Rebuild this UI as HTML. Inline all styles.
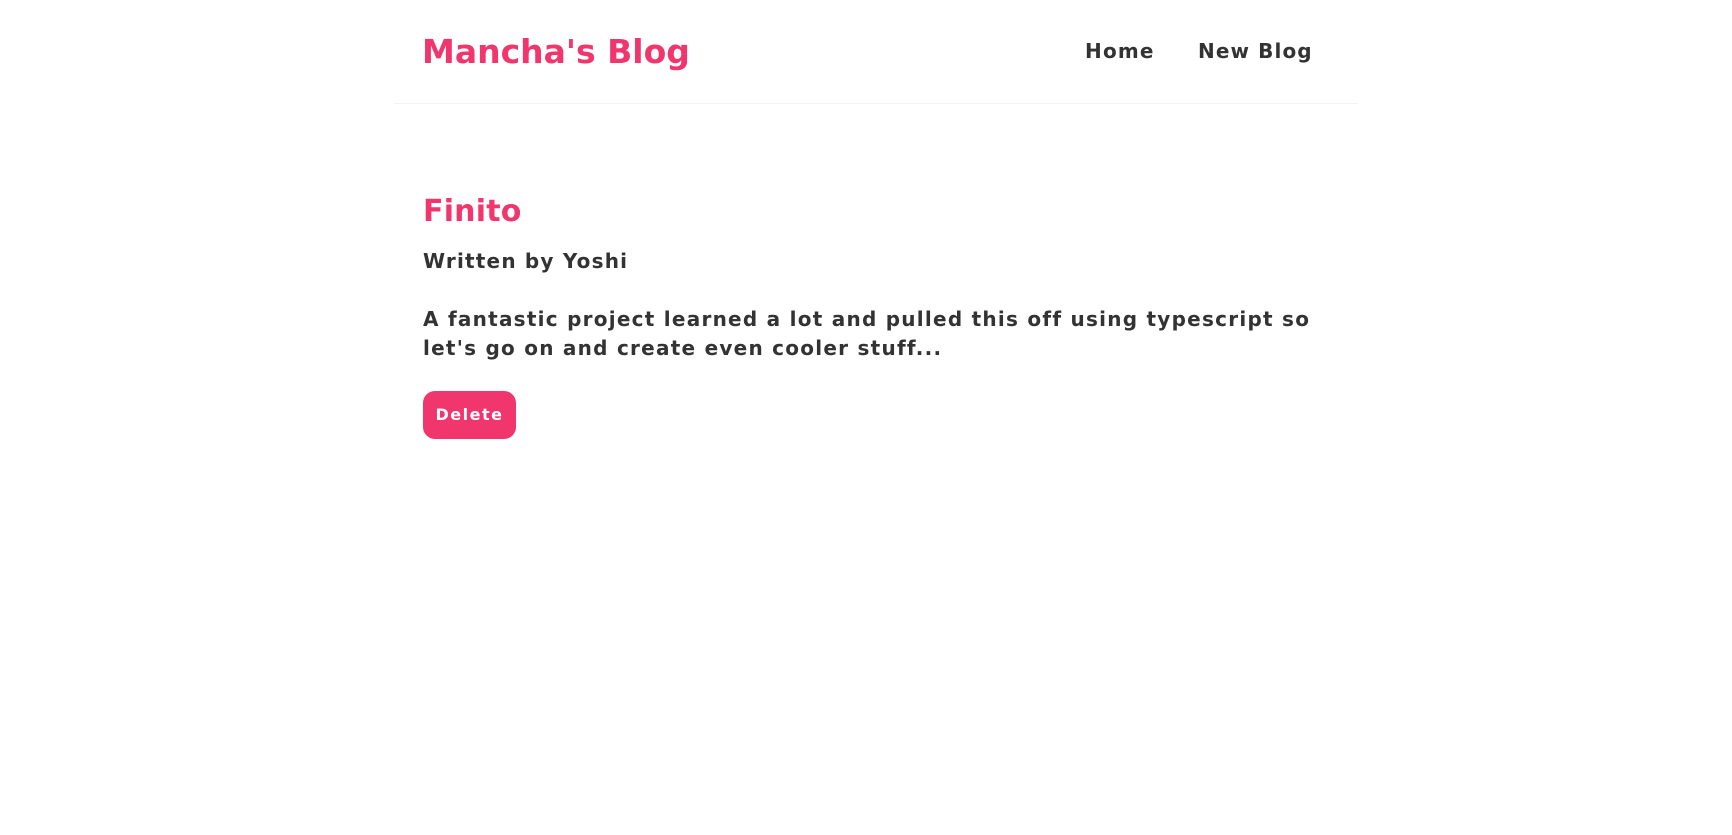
<!DOCTYPE html>
<html><head><style>
body{margin:0;background:#fff;font-family:"DejaVu Sans","Liberation Sans",sans-serif;font-weight:bold;color:#333;}
.a{position:absolute;white-space:nowrap;}
</style></head><body>
<div class="a" style="left:422px;top:32px;font-size:33px;color:#f1356d;">Mancha's Blog</div>
<div class="a" style="left:1085px;top:39px;font-size:20px;letter-spacing:1.2px;">Home</div>
<div class="a" style="left:1198px;top:39px;font-size:20px;letter-spacing:1.1px;">New Blog</div>
<div class="a" style="left:394px;top:103px;width:964px;height:1px;background:#f2f2f2;"></div>
<div class="a" style="left:423px;top:194px;font-size:30px;letter-spacing:0.2px;color:#f1356d;">Finito</div>
<div class="a" style="left:423px;top:249px;font-size:20px;letter-spacing:1.2px;">Written by Yoshi</div>
<div class="a" style="left:423px;top:305px;font-size:20px;letter-spacing:1.25px;line-height:29px;white-space:normal;width:930px;">A fantastic project learned a lot and pulled this off using typescript so let's go on and create even cooler stuff...</div>
<div class="a" style="left:423px;top:391px;width:93px;height:48px;border-radius:12px;background:#f1356d;color:#fff;font-size:16px;letter-spacing:1.5px;line-height:48px;text-align:center;">Delete</div>
</body></html>
